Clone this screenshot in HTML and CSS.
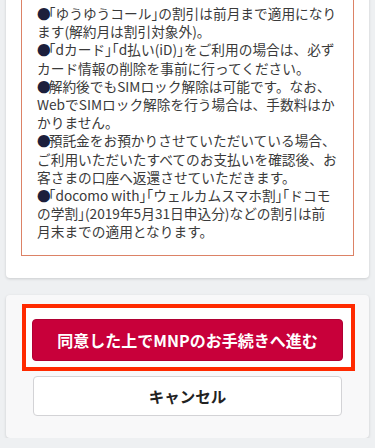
FILE: index.html
```html
<!DOCTYPE html>
<html lang="ja">
<head>
  <meta charset="UTF-8" />
  <meta name="viewport" content="width=device-width, initial-scale=1.0" />
  <title>MNP予約</title>
  <link rel="stylesheet" href="styles.css">
</head>
<body>
  <div class="page">
    <div class="card">
      <div class="notice">
        <p><span class="dot">●</span><span class="kk">「</span>ゆうゆうコール<span class="kk">」</span>の割引は前月まで適用になり<br>ます(解約月は割引対象外)。</p>
        <p><span class="dot">●</span><span class="kk">「</span>dカード<span class="kk">」「</span>d払い(iD)<span class="kk">」</span>をご利用の場合は、必ず<br>カード情報の削除を事前に行ってください。</p>
        <p><span class="dot">●</span>解約後でもSIMロック解除は可能です。なお、<br>WebでSIMロック解除を行う場合は、手数料はか<br>かりません。</p>
        <p><span class="dot">●</span>預託金をお預かりさせていただいている場合、<br>ご利用いただいたすべてのお支払いを確認後、お<br>客さまの口座へ返還させていただきます。</p>
        <p><span class="dot">●</span><span class="kk">「</span>docomo with<span class="kk">」「</span>ウェルカムスマホ割<span class="kk">」「</span>ドコモ<br>の学割<span class="kk">」</span>(2019年5月31日申込分)などの割引は前<br>月末までの適用となります。</p>
      </div>
    </div>

    <div class="card actions">
      <div class="highlight">
        <button class="btn btn-primary">同意した上でMNPのお手続きへ進む</button>
      </div>
      <button class="btn btn-cancel">キャンセル</button>
    </div>
  </div>
</body>
</html>
```

FILE: styles.css
```css
body {
  margin: 0;
  background: #eef0f2;
  font-family: "Noto Sans CJK JP", "Noto Sans", sans-serif;
  color: #3a3a3a;
  overflow: hidden;
}
.page {
  padding: 0 6px;
}
.card {
  background: #fff;
  border-radius: 4px;
  box-shadow: 0 1px 3px rgba(0, 0, 0, 0.15);
  margin-top: -30px;
  padding: 15px 15px 22px;
}
.notice {
  border: 1px solid #dc8266;
  padding: 18px 8px 14px 15px;
  font-size: 13.7px;
  line-height: 18.2px;
  white-space: nowrap;
}
.notice p {
  margin: 0;
}
.dot {
  color: #1c1f3c;
  letter-spacing: -2px;
}
.kk {
  font-feature-settings: "halt";
}
.actions {
  margin-top: 17px;
  background: #f8f8f9;
  padding: 9px 14px 22px 16px;
}
.highlight {
  border: 4px solid #ff2a00;
  padding: 11px 8px 6px 6px;
  background: #fff;
}
.btn {
  display: block;
  width: 100%;
  font-family: "Noto Sans CJK JP", sans-serif;
  font-size: 16px;
  font-weight: bold;
  border-radius: 4px;
  cursor: pointer;
}
.btn-primary {
  height: 42px;
  background: #c8003a;
  border: 1px solid #b00033;
  color: #fff;
}
.btn-cancel {
  height: 40px;
  margin: 5px 0 0 11px;
  width: 309px;
  background: #fff;
  border: 1px solid #d3d3d6;
  color: #222;
  font-size: 15.5px;
}
```
